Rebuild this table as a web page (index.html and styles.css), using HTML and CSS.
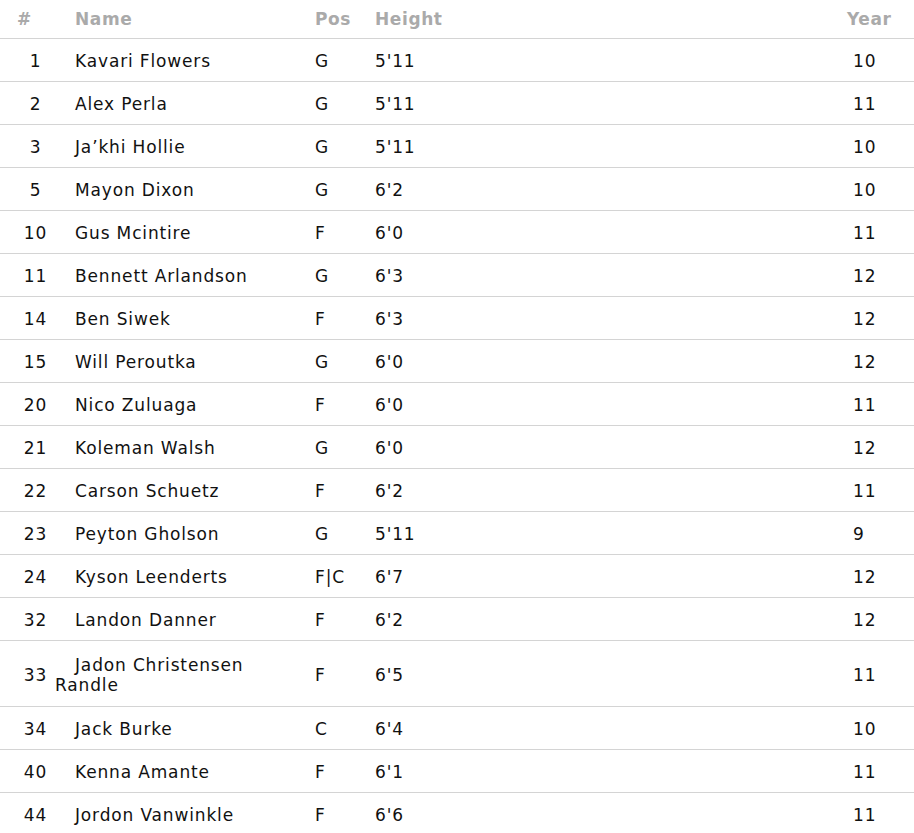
FILE: index.html
```html
<!DOCTYPE html>
<html>
<head>
<meta charset="utf-8">
<link rel="stylesheet" href="styles.css">
</head>
<body>
<table class="roster">
  <colgroup>
    <col class="c-num"><col class="c-name"><col class="c-pos"><col class="c-ht"><col class="c-yr">
  </colgroup>
  <thead>
    <tr><th class="num">#</th><th class="name">Name</th><th class="pos">Pos</th><th class="ht">Height</th><th class="yr">Year</th></tr>
  </thead>
  <tbody>
    <tr><td class="num">1</td><td class="name">Kavari Flowers</td><td class="pos">G</td><td class="ht">5'11</td><td class="yr">10</td></tr>
    <tr><td class="num">2</td><td class="name">Alex Perla</td><td class="pos">G</td><td class="ht">5'11</td><td class="yr">11</td></tr>
    <tr><td class="num">3</td><td class="name">Ja’khi Hollie</td><td class="pos">G</td><td class="ht">5'11</td><td class="yr">10</td></tr>
    <tr><td class="num">5</td><td class="name">Mayon Dixon</td><td class="pos">G</td><td class="ht">6'2</td><td class="yr">10</td></tr>
    <tr><td class="num">10</td><td class="name">Gus Mcintire</td><td class="pos">F</td><td class="ht">6'0</td><td class="yr">11</td></tr>
    <tr><td class="num">11</td><td class="name">Bennett Arlandson</td><td class="pos">G</td><td class="ht">6'3</td><td class="yr">12</td></tr>
    <tr><td class="num">14</td><td class="name">Ben Siwek</td><td class="pos">F</td><td class="ht">6'3</td><td class="yr">12</td></tr>
    <tr><td class="num">15</td><td class="name">Will Peroutka</td><td class="pos">G</td><td class="ht">6'0</td><td class="yr">12</td></tr>
    <tr><td class="num">20</td><td class="name">Nico Zuluaga</td><td class="pos">F</td><td class="ht">6'0</td><td class="yr">11</td></tr>
    <tr><td class="num">21</td><td class="name">Koleman Walsh</td><td class="pos">G</td><td class="ht">6'0</td><td class="yr">12</td></tr>
    <tr><td class="num">22</td><td class="name">Carson Schuetz</td><td class="pos">F</td><td class="ht">6'2</td><td class="yr">11</td></tr>
    <tr><td class="num">23</td><td class="name">Peyton Gholson</td><td class="pos">G</td><td class="ht">5'11</td><td class="yr">9</td></tr>
    <tr><td class="num">24</td><td class="name">Kyson Leenderts</td><td class="pos">F|C</td><td class="ht">6'7</td><td class="yr">12</td></tr>
    <tr><td class="num">32</td><td class="name">Landon Danner</td><td class="pos">F</td><td class="ht">6'2</td><td class="yr">12</td></tr>
    <tr class="tall"><td class="num">33</td><td class="name">Jadon Christensen Randle</td><td class="pos">F</td><td class="ht">6'5</td><td class="yr">11</td></tr>
    <tr><td class="num">34</td><td class="name">Jack Burke</td><td class="pos">C</td><td class="ht">6'4</td><td class="yr">10</td></tr>
    <tr><td class="num">40</td><td class="name">Kenna Amante</td><td class="pos">F</td><td class="ht">6'1</td><td class="yr">11</td></tr>
    <tr><td class="num">44</td><td class="name">Jordon Vanwinkle</td><td class="pos">F</td><td class="ht">6'6</td><td class="yr">11</td></tr>
  </tbody>
</table>
</body>
</html>
```
FILE: styles.css
```css
html, body {
  margin: 0;
  padding: 0;
  background: #ffffff;
}

body {
  font-family: "DejaVu Sans", Verdana, sans-serif;
  font-size: 17px;
  letter-spacing: 0.85px;
  color: #111111;
}

.roster {
  width: 914px;
  table-layout: fixed;
  border-collapse: collapse;
  border-spacing: 0;
}

.c-num { width: 55px; }
.c-name { width: 245px; }
.c-pos { width: 60px; }
.c-ht { width: 472px; }
.c-yr { width: 82px; }

.roster th,
.roster td {
  text-align: left;
  padding: 0;
  line-height: 20px;
  border-bottom: 1px solid #d4d4d4;
  vertical-align: middle;
}

.roster th {
  height: 38px;
  font-weight: bold;
  color: #aaaaaa;
  letter-spacing: 0.6px;
}

.roster td {
  height: 40px;
  padding-top: 2px;
}

.roster th.num {
  padding-left: 17px;
}

.roster td.num {
  padding-left: 17px;
  padding-right: 1px;
  text-align: center;
}

.roster .name {
  text-indent: 20px;
}

.roster .pos,
.roster .ht {
  padding-left: 15px;
}

.roster th.yr {
  padding-left: 15px;
}

.roster td.yr {
  padding-left: 21px;
}

.roster tr.tall td {
  height: 63px;
}
```
